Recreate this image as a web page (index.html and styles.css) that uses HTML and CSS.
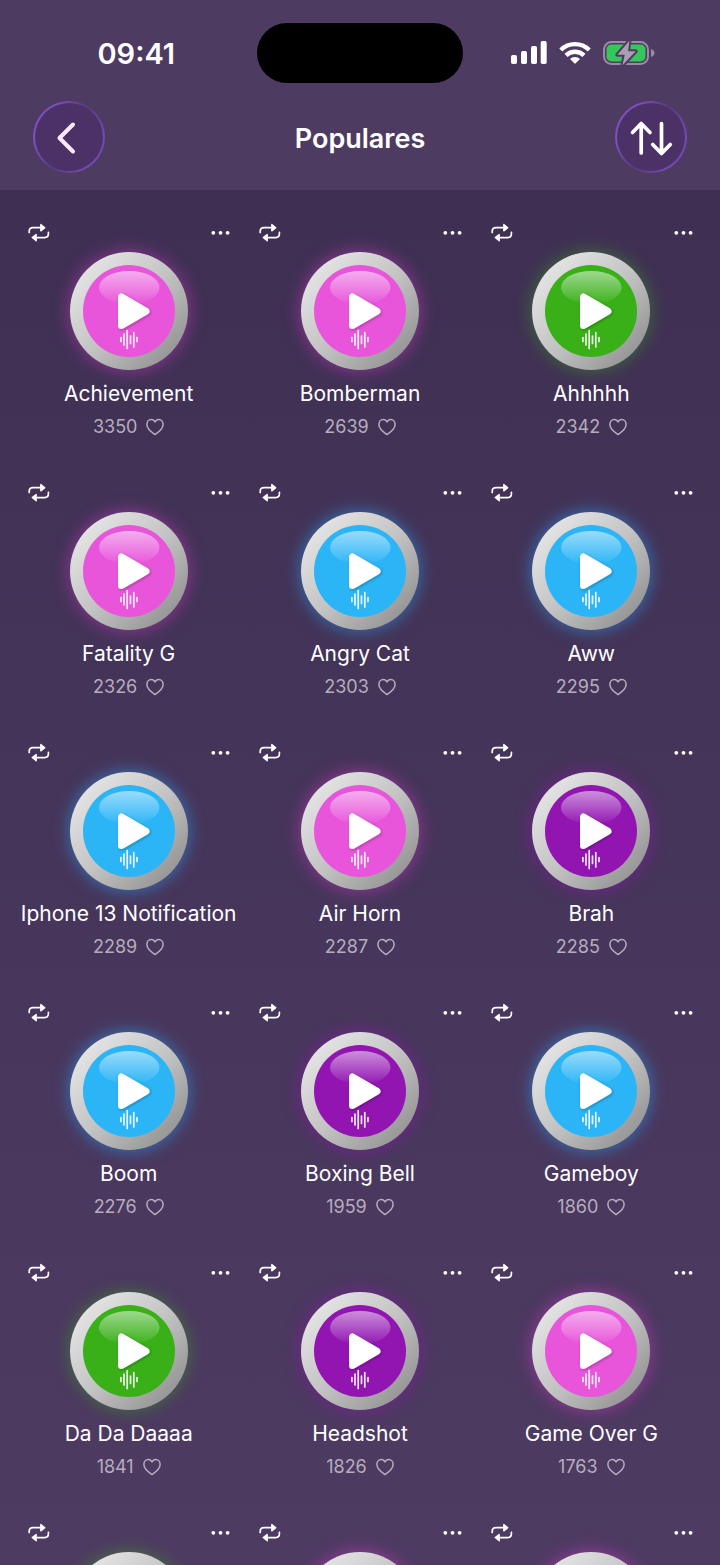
FILE: index.html
```html
<!DOCTYPE html>
<html lang="pt-BR">
<head>
<meta charset="utf-8">
<meta name="viewport" content="width=device-width, initial-scale=1">
<title>Populares</title>
<link rel="stylesheet" href="styles.css">
</head>
<body>
<svg class="sprite" width="0" height="0" aria-hidden="true">
  <defs>
    <linearGradient id="ring" x1="0.1" y1="0.1" x2="0.9" y2="0.9">
      <stop offset="0" stop-color="#e6e6e6"/>
      <stop offset="0.5" stop-color="#c4c4c4"/>
      <stop offset="1" stop-color="#929292"/>
    </linearGradient>
    <linearGradient id="gloss" x1="0" y1="0" x2="0" y2="1">
      <stop offset="0" stop-color="#fff" stop-opacity="0.52"/>
      <stop offset="1" stop-color="#fff" stop-opacity="0.02"/>
    </linearGradient>
    <filter id="drop" x="-30%" y="-30%" width="160%" height="160%">
      <feDropShadow dx="1" dy="1" stdDeviation="1.5" flood-color="#000" flood-opacity="0.3"/>
    </filter>
  </defs>
  <symbol id="disc" viewBox="0 0 118 118">
    <circle cx="59" cy="59" r="59" fill="url(#ring)"/>
    <circle cx="59" cy="59" r="46" fill="currentColor"/>
    <rect x="29" y="19" width="60.5" height="33" rx="30" ry="16.5" fill="url(#gloss)"/>
    <path d="M51.5 45v28.500L76 59.300z" fill="#fff" stroke="#fff" stroke-width="7" stroke-linejoin="round" filter="url(#drop)"/>
    <path d="M50.900 85.500v4M54 82v11M57.200 78.500v18M60.500 84v7.500M63.800 80.500v14.500M67 85.500v4" fill="none" stroke="#fff" stroke-width="1.7" stroke-linecap="round" opacity="0.9"/>
  </symbol>
  <symbol id="repeat" viewBox="0 0 22 20">
    <path d="M1.2 10.500V9.500Q1.200 5.700 5 5.700H13.500M20.400 10.300V11.800Q20.400 15.600 16.600 15.600H8" fill="none" stroke="currentColor" stroke-width="1.7" stroke-linecap="round"/>
    <path d="M12.800 2.500L16.800 5.700L12.800 8.900zM8.200 12.400L4.200 15.600L8.200 18.800z" fill="currentColor" stroke="currentColor" stroke-width="1.3" stroke-linejoin="round"/>
  </symbol>
  <symbol id="dots" viewBox="0 0 20 20">
    <circle cx="3.300" cy="10.800" r="1.900"/><circle cx="10.500" cy="10.800" r="1.900"/><circle cx="17.600" cy="10.800" r="1.900"/>
  </symbol>
  <symbol id="heart" viewBox="0 0 18 18">
    <path d="M9 16.600C4.200 13.400 .900 10.200 .900 6.500C.900 3.600 2.700 1.500 5.200 1.500C6.900 1.500 8.300 2.400 9 4C9.700 2.400 11.100 1.500 12.800 1.500C15.300 1.500 17.100 3.600 17.100 6.500C17.100 10.200 13.800 13.400 9 16.600z" fill="none" stroke="currentColor" stroke-width="1.500" stroke-linejoin="round"/>
  </symbol>
</svg>

<div class="app">
  <header class="top">
    <div class="status">
      <time class="clock">09:41</time>
      <div class="island"></div>
      <div class="indicators">
        <svg width="36" height="24" viewBox="0 0 36 24" fill="#fff" aria-hidden="true"><rect y="14" width="6" height="9" rx="1.700"/><rect x="10" y="10" width="6" height="13" rx="1.700"/><rect x="20" y="5" width="6" height="18" rx="1.700"/><rect x="29.700" width="6" height="23" rx="1.700"/></svg>
        <svg width="32" height="24" viewBox="0 0 32 24" fill="none" stroke="#fff" stroke-width="4.300" aria-hidden="true"><path d="M1.800 9A20.300 20.300 0 0 1 30.200 9"/><path d="M7 14.400A12.900 12.900 0 0 1 25 14.400"/><path d="M11 18A7.100 7.100 0 0 1 21 18L16.700 22.300Q16 23 15.300 22.300z" fill="#fff" stroke="none"/></svg>
        <svg class="battery" width="52" height="24" viewBox="0 0 52 24" aria-hidden="true"><rect x="1" y="1" width="44" height="22" rx="7.500" fill="none" stroke="#998ba6" stroke-width="2"/><path d="M48 8q3.500 1.300 3.500 4t-3.500 4z" fill="#998ba6"/><rect x="3.500" y="3.500" width="39" height="17" rx="5" fill="#34c759"/><path d="M26.500 -0.300L14.300 13.700H21.700L19.500 24.300L32.700 10.300H25z" fill="#aa9db6" stroke="#4e3b62" stroke-width="4" stroke-linejoin="round" paint-order="stroke"/></svg>
      </div>
    </div>
    <nav class="bar">
      <button class="round" aria-label="Voltar"><svg viewBox="0 0 72 72" fill="none" stroke="#fdeaff" stroke-width="4" stroke-linecap="round" stroke-linejoin="round"><path d="M40 23.500L26.500 37L40 50.500"/></svg></button>
      <h1 class="title">Populares</h1>
      <button class="round" aria-label="Ordenar"><svg viewBox="0 0 72 72" fill="none" stroke="#fff" stroke-width="3.700" stroke-linecap="round" stroke-linejoin="round"><path d="M26.200 52V22.500M17.500 31.500L26.200 22.500L35 31.500M46.500 22.500V52M37.700 43.500L46.500 52.500L55.300 43.500"/></svg></button>
    </nav>
  </header>

  <main class="grid">
    <article class="card pink"><div class="tools"><button class="tool" aria-label="Repetir"><svg class="loop"><use href="#repeat"/></svg></button><button class="tool" aria-label="Mais"><svg class="more"><use href="#dots"/></svg></button></div><button class="pad" aria-label="Tocar Achievement"><svg><use href="#disc"/></svg></button><h2 class="name">Achievement</h2><p class="likes">3350 <svg><use href="#heart"/></svg></p></article>
    <article class="card pink"><div class="tools"><button class="tool" aria-label="Repetir"><svg class="loop"><use href="#repeat"/></svg></button><button class="tool" aria-label="Mais"><svg class="more"><use href="#dots"/></svg></button></div><button class="pad" aria-label="Tocar Bomberman"><svg><use href="#disc"/></svg></button><h2 class="name">Bomberman</h2><p class="likes">2639 <svg><use href="#heart"/></svg></p></article>
    <article class="card green"><div class="tools"><button class="tool" aria-label="Repetir"><svg class="loop"><use href="#repeat"/></svg></button><button class="tool" aria-label="Mais"><svg class="more"><use href="#dots"/></svg></button></div><button class="pad" aria-label="Tocar Ahhhhh"><svg><use href="#disc"/></svg></button><h2 class="name">Ahhhhh</h2><p class="likes">2342 <svg><use href="#heart"/></svg></p></article>

    <article class="card pink"><div class="tools"><button class="tool" aria-label="Repetir"><svg class="loop"><use href="#repeat"/></svg></button><button class="tool" aria-label="Mais"><svg class="more"><use href="#dots"/></svg></button></div><button class="pad" aria-label="Tocar Fatality G"><svg><use href="#disc"/></svg></button><h2 class="name">Fatality G</h2><p class="likes">2326 <svg><use href="#heart"/></svg></p></article>
    <article class="card blue"><div class="tools"><button class="tool" aria-label="Repetir"><svg class="loop"><use href="#repeat"/></svg></button><button class="tool" aria-label="Mais"><svg class="more"><use href="#dots"/></svg></button></div><button class="pad" aria-label="Tocar Angry Cat"><svg><use href="#disc"/></svg></button><h2 class="name">Angry Cat</h2><p class="likes">2303 <svg><use href="#heart"/></svg></p></article>
    <article class="card blue"><div class="tools"><button class="tool" aria-label="Repetir"><svg class="loop"><use href="#repeat"/></svg></button><button class="tool" aria-label="Mais"><svg class="more"><use href="#dots"/></svg></button></div><button class="pad" aria-label="Tocar Aww"><svg><use href="#disc"/></svg></button><h2 class="name">Aww</h2><p class="likes">2295 <svg><use href="#heart"/></svg></p></article>

    <article class="card blue"><div class="tools"><button class="tool" aria-label="Repetir"><svg class="loop"><use href="#repeat"/></svg></button><button class="tool" aria-label="Mais"><svg class="more"><use href="#dots"/></svg></button></div><button class="pad" aria-label="Tocar Iphone 13 Notification"><svg><use href="#disc"/></svg></button><h2 class="name">Iphone 13 Notification</h2><p class="likes">2289 <svg><use href="#heart"/></svg></p></article>
    <article class="card pink"><div class="tools"><button class="tool" aria-label="Repetir"><svg class="loop"><use href="#repeat"/></svg></button><button class="tool" aria-label="Mais"><svg class="more"><use href="#dots"/></svg></button></div><button class="pad" aria-label="Tocar Air Horn"><svg><use href="#disc"/></svg></button><h2 class="name">Air Horn</h2><p class="likes">2287 <svg><use href="#heart"/></svg></p></article>
    <article class="card purple"><div class="tools"><button class="tool" aria-label="Repetir"><svg class="loop"><use href="#repeat"/></svg></button><button class="tool" aria-label="Mais"><svg class="more"><use href="#dots"/></svg></button></div><button class="pad" aria-label="Tocar Brah"><svg><use href="#disc"/></svg></button><h2 class="name">Brah</h2><p class="likes">2285 <svg><use href="#heart"/></svg></p></article>

    <article class="card blue"><div class="tools"><button class="tool" aria-label="Repetir"><svg class="loop"><use href="#repeat"/></svg></button><button class="tool" aria-label="Mais"><svg class="more"><use href="#dots"/></svg></button></div><button class="pad" aria-label="Tocar Boom"><svg><use href="#disc"/></svg></button><h2 class="name">Boom</h2><p class="likes">2276 <svg><use href="#heart"/></svg></p></article>
    <article class="card purple"><div class="tools"><button class="tool" aria-label="Repetir"><svg class="loop"><use href="#repeat"/></svg></button><button class="tool" aria-label="Mais"><svg class="more"><use href="#dots"/></svg></button></div><button class="pad" aria-label="Tocar Boxing Bell"><svg><use href="#disc"/></svg></button><h2 class="name">Boxing Bell</h2><p class="likes">1959 <svg><use href="#heart"/></svg></p></article>
    <article class="card blue"><div class="tools"><button class="tool" aria-label="Repetir"><svg class="loop"><use href="#repeat"/></svg></button><button class="tool" aria-label="Mais"><svg class="more"><use href="#dots"/></svg></button></div><button class="pad" aria-label="Tocar Gameboy"><svg><use href="#disc"/></svg></button><h2 class="name">Gameboy</h2><p class="likes">1860 <svg><use href="#heart"/></svg></p></article>

    <article class="card green"><div class="tools"><button class="tool" aria-label="Repetir"><svg class="loop"><use href="#repeat"/></svg></button><button class="tool" aria-label="Mais"><svg class="more"><use href="#dots"/></svg></button></div><button class="pad" aria-label="Tocar Da Da Daaaa"><svg><use href="#disc"/></svg></button><h2 class="name">Da Da Daaaa</h2><p class="likes">1841 <svg><use href="#heart"/></svg></p></article>
    <article class="card purple"><div class="tools"><button class="tool" aria-label="Repetir"><svg class="loop"><use href="#repeat"/></svg></button><button class="tool" aria-label="Mais"><svg class="more"><use href="#dots"/></svg></button></div><button class="pad" aria-label="Tocar Headshot"><svg><use href="#disc"/></svg></button><h2 class="name">Headshot</h2><p class="likes">1826 <svg><use href="#heart"/></svg></p></article>
    <article class="card pink"><div class="tools"><button class="tool" aria-label="Repetir"><svg class="loop"><use href="#repeat"/></svg></button><button class="tool" aria-label="Mais"><svg class="more"><use href="#dots"/></svg></button></div><button class="pad" aria-label="Tocar Game Over G"><svg><use href="#disc"/></svg></button><h2 class="name">Game Over G</h2><p class="likes">1763 <svg><use href="#heart"/></svg></p></article>

    <article class="card green"><div class="tools"><button class="tool" aria-label="Repetir"><svg class="loop"><use href="#repeat"/></svg></button><button class="tool" aria-label="Mais"><svg class="more"><use href="#dots"/></svg></button></div><button class="pad" aria-label="Tocar"><svg><use href="#disc"/></svg></button></article>
    <article class="card pink"><div class="tools"><button class="tool" aria-label="Repetir"><svg class="loop"><use href="#repeat"/></svg></button><button class="tool" aria-label="Mais"><svg class="more"><use href="#dots"/></svg></button></div><button class="pad" aria-label="Tocar"><svg><use href="#disc"/></svg></button></article>
    <article class="card pink"><div class="tools"><button class="tool" aria-label="Repetir"><svg class="loop"><use href="#repeat"/></svg></button><button class="tool" aria-label="Mais"><svg class="more"><use href="#dots"/></svg></button></div><button class="pad" aria-label="Tocar"><svg><use href="#disc"/></svg></button></article>
  </main>
</div>
</body>
</html>
```

FILE: styles.css
```css
* {
  box-sizing: border-box;
}

body {
  margin: 0;
  background: #4e3b62;
  color: #fff;
  font-family: Inter, "Liberation Sans", sans-serif;
}

button {
  display: block;
  margin: 0;
  padding: 0;
  border: 0;
  background: none;
  color: inherit;
  cursor: pointer;
}

svg {
  display: block;
  flex: none;
}

.sprite {
  position: absolute;
}

.app {
  display: flex;
  flex-direction: column;
  height: 100vh;
}

/* Header */
.top {
  flex: none;
  padding: 23px 0 17px;
  background: #4e3b62;
}

.status {
  display: grid;
  grid-template-columns: 1fr 206px 1fr;
  align-items: center;
  justify-items: center;
  padding: 0 17px 0 16px;
}

.clock {
  padding-top: 2px;
  font-size: 29px;
  font-weight: 600;
  line-height: 36px;
}

.island {
  width: 100%;
  height: 60px;
  border-radius: 30px;
  background: #000;
}

.indicators {
  display: flex;
  align-items: center;
  gap: 12px;
}

.battery {
  overflow: visible;
}

.bar {
  display: flex;
  align-items: center;
  justify-content: space-between;
  margin-top: 18px;
  padding: 0 33px;
}

.title {
  margin: 0;
  padding-top: 3px;
  font-size: 27px;
  font-weight: 600;
  line-height: 36px;
}

.round {
  width: 72px;
  height: 72px;
  border: 2px solid transparent;
  border-radius: 50%;
  background:
    linear-gradient(#4c3167, #4c3167) padding-box,
    linear-gradient(120deg, #7d50c0 0%, #7d50c0 22%, #573a7c 50%, #7349b4 78%, #7349b4 100%) border-box;
}

.round svg {
  width: 72px;
  height: 72px;
  margin: -2px;
}

/* Sound grid */
.grid {
  flex: 1;
  min-height: 0;
  display: grid;
  grid-template-columns: repeat(3, 1fr);
  align-content: start;
  padding: 32px 13px 0;
  overflow-y: auto;
  scrollbar-width: none;
  background: linear-gradient(#3f3053, #4e3b62);
}

.card {
  display: flex;
  flex-direction: column;
  align-items: center;
  padding-bottom: 43px;
}

.tools {
  display: flex;
  align-self: stretch;
  justify-content: space-between;
  padding: 0 14px 0 15px;
}

.loop {
  width: 22px;
  height: 20px;
}

.more {
  width: 20px;
  height: 20px;
  fill: #fff;
}

.pad {
  width: 118px;
  height: 118px;
  margin: 10px 0 9px;
  border-radius: 50%;
  color: var(--tone);
  box-shadow: 0 0 16px 1px var(--glow);
}

.pad svg {
  width: 118px;
  height: 118px;
}

.pink {
  --tone: #e855db;
  --glow: #d838d080;
}

.blue {
  --tone: #2bb5f7;
  --glow: #2b9ff790;
}

.green {
  --tone: #39b018;
  --glow: #39b01870;
}

.purple {
  --tone: #9215b2;
  --glow: #9215b290;
}

.name {
  margin: 0;
  font-size: 21px;
  font-weight: 400;
  line-height: 30px;
  white-space: nowrap;
}

.likes {
  display: flex;
  align-items: center;
  gap: 9px;
  margin: 6px 0 0;
  color: #b5adbd;
  font-size: 18px;
  line-height: 24px;
}

.likes svg {
  width: 18px;
  height: 18px;
}
```
